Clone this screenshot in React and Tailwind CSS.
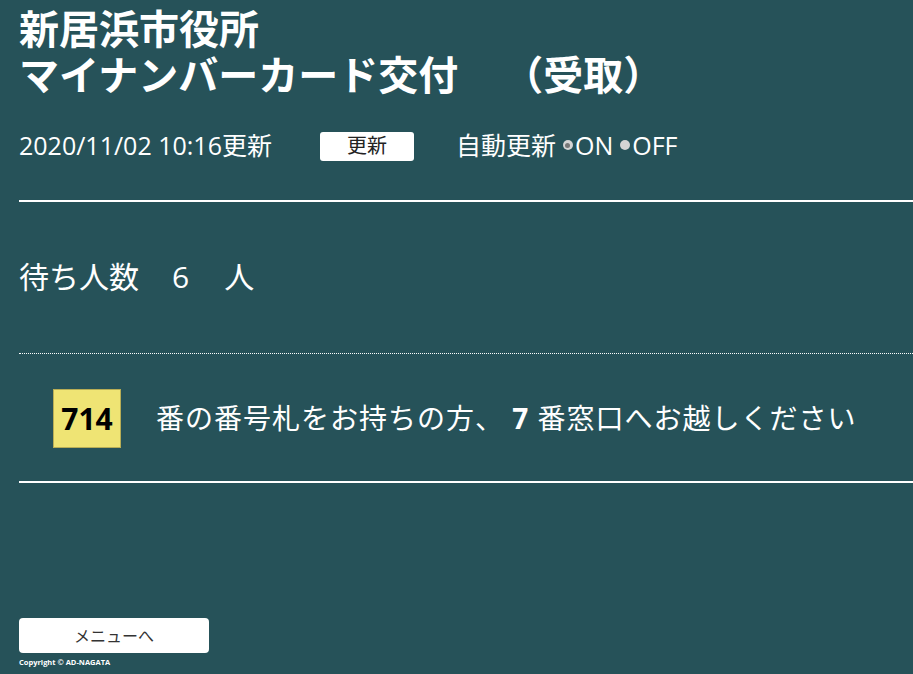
import React, { useState } from "react";

const JP = "font-['Open_Sans','Noto_Sans_CJK_JP',sans-serif]";

const Radio = ({ checked }) => (
  <span className="inline-flex w-[10px] h-[10px] rounded-full bg-[#d4d4d4] items-center justify-center mx-[2px] mb-[2px]">
    {checked && <span className="w-[5px] h-[5px] rounded-full bg-[#777]" />}
  </span>
);

export default function App() {
  const [auto, setAuto] = useState(true);
  const waiting = 6;
  const ticket = 714;
  const counter = 7;

  return (
    <div className={`h-screen overflow-hidden bg-[#265259] text-white pl-[19px] ${JP}`}>
      {/* title */}
      <h1 className="pt-[6px] text-[40px] leading-[46px] font-bold">
        新居浜市役所
        <br />
        マイナンバーカード交付<span className="ml-[25px]">　（受取）</span>
      </h1>

      {/* update row */}
      <div className="flex items-center mt-[33px] text-[25px] h-[30px]">
        <span>2020/11/02 10:16更新</span>
        <button className="ml-[48px] w-[94px] h-[29px] bg-white text-[#222] rounded-[3px] text-[20px] leading-none">
          更新
        </button>
        <span className="ml-[42px]">自動更新</span>
        <label className="ml-[5px] flex items-center cursor-pointer" onClick={() => setAuto(true)}>
          <Radio checked={auto} />
          ON
        </label>
        <label className="ml-[5px] flex items-center cursor-pointer" onClick={() => setAuto(false)}>
          <Radio checked={!auto} />
          OFF
        </label>
      </div>

      <hr className="mt-[39px] border-0 border-t-2 border-white" />

      {/* waiting count */}
      <div className="mt-[54px] text-[30px] h-[40px] flex items-center">
        <span>待ち人数</span>
        <span className="ml-[33px]">{waiting}</span>
        <span className="ml-[35px]">人</span>
      </div>

      <hr className="mt-[57px] border-0 border-t border-dotted border-white" />

      {/* call row */}
      <div className="flex items-center mt-[34px] h-[60px]">
        <div className="ml-[34px] w-[68px] h-[59px] bg-[#efe474] border border-[#b8ad55] text-black font-bold text-[30px] flex items-center justify-center">
          {ticket}
        </div>
        <div className="ml-[35px] text-[28px] tracking-[1px]">
          番の番号札をお持ちの方、 <span className="font-bold">{counter}</span> 番窓口へお越しください
        </div>
      </div>

      <hr className="mt-[33px] border-0 border-t-2 border-white" />

      {/* footer */}
      <button className="mt-[135px] w-[190px] h-[35px] bg-white text-[#333] rounded-[4px] text-[16px] block">
        メニューへ
      </button>
      <div className="mt-[6px] text-[7.5px] font-bold leading-none">Copyright © AD-NAGATA</div>
    </div>
  );
}
